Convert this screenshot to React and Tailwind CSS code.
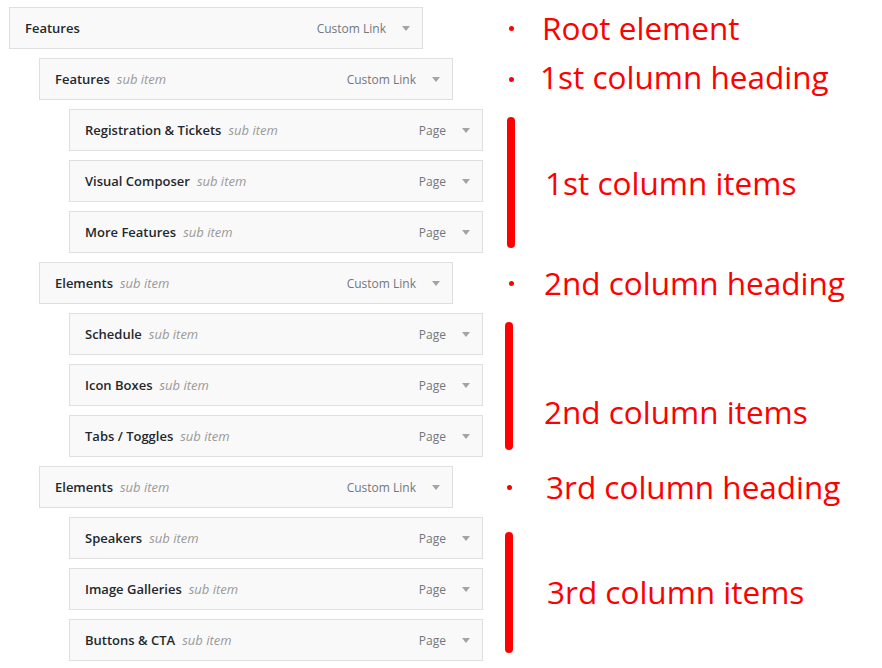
import React from "react";

const rows = [
	{ title: "Features", level: 0, type: "Custom Link", sub: false },
	{ title: "Features", level: 1, type: "Custom Link", sub: true },
	{ title: "Registration & Tickets", level: 2, type: "Page", sub: true },
	{ title: "Visual Composer", level: 2, type: "Page", sub: true },
	{ title: "More Features", level: 2, type: "Page", sub: true },
	{ title: "Elements", level: 1, type: "Custom Link", sub: true },
	{ title: "Schedule", level: 2, type: "Page", sub: true },
	{ title: "Icon Boxes", level: 2, type: "Page", sub: true },
	{ title: "Tabs / Toggles", level: 2, type: "Page", sub: true },
	{ title: "Elements", level: 1, type: "Custom Link", sub: true },
	{ title: "Speakers", level: 2, type: "Page", sub: true },
	{ title: "Image Galleries", level: 2, type: "Page", sub: true },
	{ title: "Buttons & CTA", level: 2, type: "Page", sub: true },
];

const indent = ["ml-0", "ml-[30px]", "ml-[60px]"];

const Arrow = () => (
	<svg width="8" height="5" viewBox="0 0 8 5" className="ml-[16px] shrink-0">
		<path d="M0 0 L8 0 L4 5 Z" fill="#a0a5aa" />
	</svg>
);

const MenuItem = ({ title, level, type, sub }) => (
	<div
		className={`${indent[level]} col-start-1 flex h-[42px] w-[414px] items-center border border-[#dfdfdf] bg-[#f9f9f9] pl-[15px] pr-[12px] pt-px text-[13px]`}
	>
		<span className="font-semibold text-[#23282d]">{title}</span>
		{sub && <span className="ml-[7px] italic text-[#999]">sub item</span>}
		<span className="ml-auto text-[12px] text-[#72777c]">{type}</span>
		<Arrow />
	</div>
);

const HeadingNote = ({ className, textClass, children }) => (
	<div className={`col-start-2 flex items-center pl-[26px] ${className}`}>
		<span className="h-[5px] w-[5px] shrink-0 rounded-full bg-[#ff0000]" />
		<span
			className={`text-[31.5px] leading-none text-[#ff0000] ${textClass}`}
		>
			{children}
		</span>
	</div>
);

const ItemsNote = ({ className, barClass, textClass, children }) => (
	<div className={`col-start-2 row-span-3 flex pl-[24px] ${className}`}>
		<span className={`w-[8px] shrink-0 rounded-full bg-[#ff0000] ${barClass}`} />
		<span
			className={`self-center text-[31.5px] leading-none text-[#ff0000] ${textClass}`}
		>
			{children}
		</span>
	</div>
);

export default function App() {
	return (
		<div
			className="min-h-[668px] w-[882px] bg-white pl-[9px] pt-[7px]"
			style={{ fontFamily: '"Open Sans", "Noto Sans", sans-serif' }}
		>
			<div className="grid grid-cols-[474px_1fr] auto-rows-[42px] gap-y-[9px]">
				{rows.map((row, i) => (
					<MenuItem key={i} {...row} />
				))}

				<HeadingNote className="row-start-1" textClass="ml-[28px]">
					Root element
				</HeadingNote>
				<HeadingNote className="row-start-2" textClass="ml-[26px] -mt-[5px]">
					1st column heading
				</HeadingNote>
				<ItemsNote
					className="row-start-3"
					barClass="mt-[8px] mb-[5px]"
					textClass="ml-[30px] mt-[4px]"
				>
					1st column items
				</ItemsNote>
				<HeadingNote className="row-start-6" textClass="ml-[30px]">
					2nd column heading
				</HeadingNote>
				<ItemsNote
					className="row-start-7"
					barClass="mt-[9px] mb-[7px] -ml-[2px]"
					textClass="ml-[31px] mt-[53px]"
				>
					2nd column items
				</ItemsNote>
				<HeadingNote className="row-start-10 !pl-[24px]" textClass="ml-[34px]">
					3rd column heading
				</HeadingNote>
				<ItemsNote
					className="row-start-11"
					barClass="mt-[15px] mb-[8px] -ml-[2px]"
					textClass="ml-[34px] mt-[6px]"
				>
					3rd column items
				</ItemsNote>
			</div>
		</div>
	);
}
